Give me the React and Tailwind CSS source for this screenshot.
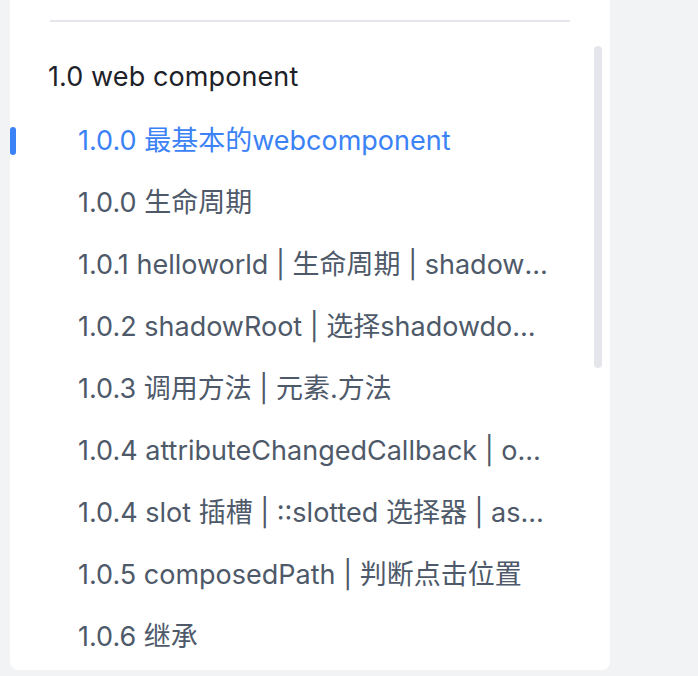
const items = [
  { label: '1.0.0 最基本的webcomponent', active: true },
  { label: '1.0.0 生命周期' },
  { label: '1.0.1 helloworld | 生命周期 | shadowRoot | 模板' },
  { label: '1.0.2 shadowRoot | 选择shadowdom 中的元素' },
  { label: '1.0.3 调用方法 | 元素.方法' },
  { label: '1.0.4 attributeChangedCallback | observedAttributes' },
  { label: '1.0.4 slot 插槽 | ::slotted 选择器 | assignedNodes' },
  { label: '1.0.5 composedPath | 判断点击位置' },
  { label: '1.0.6 继承' },
];

export default function App() {
  return (
    <div
      className="w-[698px] h-[676px] bg-[#f2f3f5] pl-[10px] overflow-hidden"
      style={{ fontFamily: 'Inter, "Noto Sans CJK SC", sans-serif' }}
    >
      <div className="w-[600px] h-[670px] bg-white rounded-b-lg flex">
        {/* toc list */}
        <div className="flex-1 flex flex-col">
          <div className="pt-[20px] pl-[40px] pr-[24px]">
            <div className="h-[2px] bg-[#e5e6eb]" />
          </div>
          <div className="mt-[24px] h-[62px] flex items-center pl-[38px] text-[27px] tracking-[0.1px] text-[#1d2129]">
            1.0 web component
          </div>
          <div className="mt-[2px] flex flex-col">
            {items.map((item) => (
              <div key={item.label} className="h-[62px] flex items-center">
                <div
                  className={
                    item.active
                      ? 'w-[6px] h-[28px] rounded-full bg-[#3b82f6] shrink-0'
                      : 'w-[6px] h-[28px] shrink-0'
                  }
                />
                <div
                  className={
                    item.active
                      ? 'pl-[62px] w-[538px] truncate text-[27px] text-[#3b82f6]'
                      : 'pl-[62px] w-[538px] truncate text-[27px] text-[#4e5969]'
                  }
                >
                  {item.label}
                </div>
              </div>
            ))}
          </div>
        </div>
        {/* scrollbar */}
        <div className="w-[16px] shrink-0 pt-[46px]">
          <div className="w-[8px] h-[322px] rounded-full bg-[#e5e6eb]" />
        </div>
      </div>
    </div>
  );
}
